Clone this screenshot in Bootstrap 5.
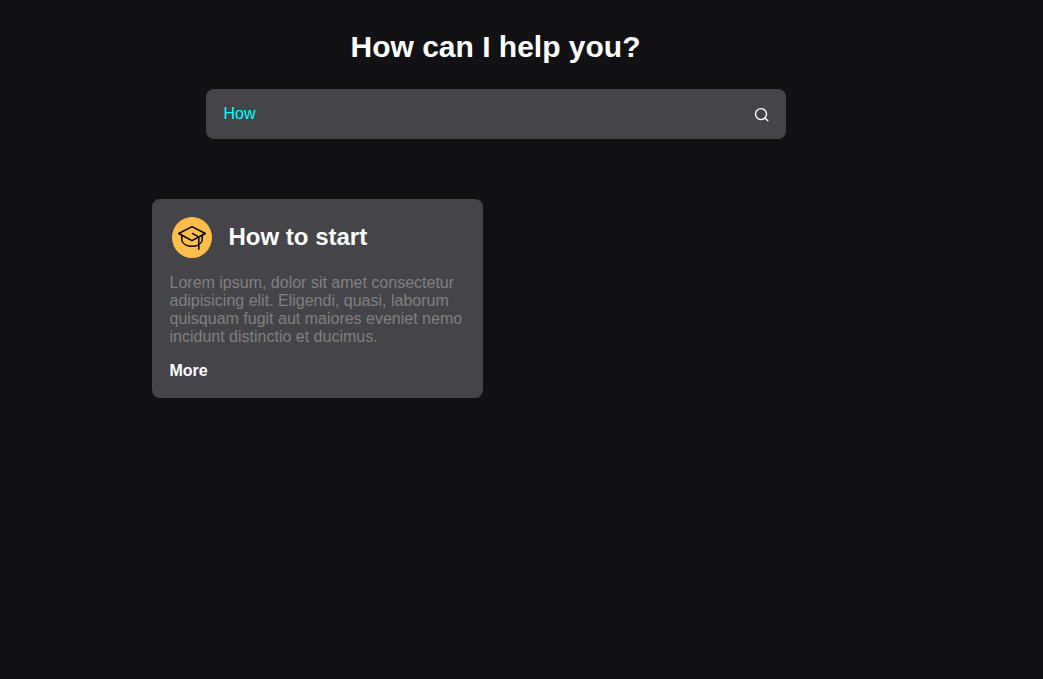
<!DOCTYPE html>
<html lang="en">
<head>
<meta charset="utf-8">
<meta name="viewport" content="width=device-width, initial-scale=1">
<title>How can I help you?</title>
<link href="https://cdn.jsdelivr.net/npm/bootstrap@5.3.0/dist/css/bootstrap.min.css" rel="stylesheet">
<style>
  body {
    background: #121214;
    color: #fff;
    font-family: "Liberation Sans", Arial, sans-serif;
    font-size: 16px;
    line-height: 18px;
  }
  .help-page { padding: 29px 52px 32px 0; }
  .help-title { font-size: 30px; line-height: 36px; margin-bottom: 24px; }
  .search-box {
    max-width: 580px;
    height: 50px;
    margin-bottom: 60px;
    padding: 0 16px 0 18px;
    background: #454449;
    border-radius: 8px;
  }
  .search-box:focus-within { outline: 1px solid #77767c; }
  .search-input,
  .search-input:focus {
    background: transparent;
    color: #0ff;
    box-shadow: none;
    line-height: 24px;
  }
  .search-btn { color: #fff; line-height: 0; }
  .topics { max-width: 688px; }
  .topic-grid { --bs-gutter-x: 26px; --bs-gutter-y: 26px; }
  .topic {
    background: #454449;
    border-radius: 8px;
    padding: 18px;
  }
  .topic-head { gap: 15px; }
  .topic-icon { margin: 0 2px; flex: none; }
  .topic-title { font-size: 24px; line-height: 40px; }
  .topic-text { color: gray; margin: 16px 0; }
  .topic-link { color: #fff; }
</style>
</head>
<body>
<main class="help-page">
  <h1 class="help-title fw-bold text-center" id="help-title">How can I help you?</h1>

  <form class="search-box d-flex align-items-center mx-auto" role="search">
    <input class="search-input form-control border-0 rounded-0 p-0" type="text" value="How" autocomplete="off" aria-labelledby="help-title">
    <button class="search-btn btn border-0 p-0" type="button" aria-label="Search">
      <svg width="17" height="17" viewBox="0 0 17 17" fill="none" stroke="currentColor" stroke-width="1.4" stroke-linecap="round">
        <circle cx="8" cy="8.1" r="5.5"/>
        <path d="M12 12.1 14.8 14.8"/>
      </svg>
    </button>
  </form>

  <section class="topics mx-auto">
    <div class="row topic-grid">
      <div class="col-12 col-md-6">
        <article class="topic">
          <div class="topic-head d-flex align-items-start">
            <svg class="topic-icon" width="40" height="41" viewBox="0 0 40 41" fill="none" stroke="#000" stroke-width="1.5" stroke-linejoin="round">
              <ellipse cx="20" cy="20.5" rx="20" ry="20.5" fill="#ffbe4a" stroke="none"/>
              <path d="M20 9.7 33.3 16.5 20 23.6 6.8 16.5Z"/>
              <path d="M9.8 18V23.4C11 27.2 15.5 29.3 20 29.3 24.5 29.3 29 27.2 30.2 23.4V18"/>
              <path d="M20 16.2 26.8 20.1V32.8"/>
            </svg>
            <h2 class="topic-title fw-bold mb-0">How to start</h2>
          </div>
          <p class="topic-text">Lorem ipsum, dolor sit amet consectetur adipisicing elit. Eligendi, quasi, laborum quisquam fugit aut maiores eveniet nemo incidunt distinctio et ducimus.</p>
          <a class="topic-link fw-bold text-decoration-none d-inline-block align-top" href="#">More</a>
        </article>
      </div>
    </div>
  </section>
</main>
<script src="https://cdn.jsdelivr.net/npm/bootstrap@5.3.0/dist/js/bootstrap.bundle.min.js"></script>
</body>
</html>
